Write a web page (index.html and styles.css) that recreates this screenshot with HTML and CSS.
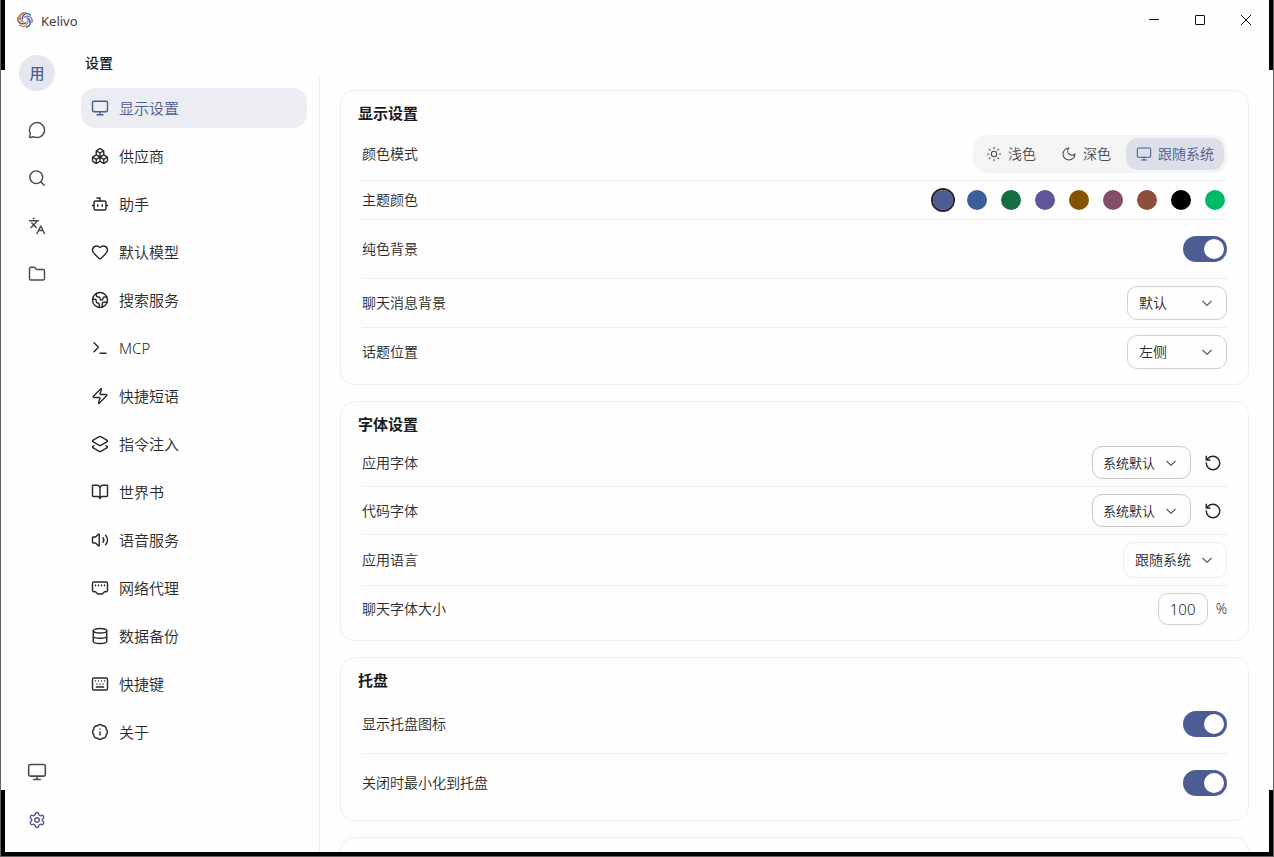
FILE: index.html
```html
<!DOCTYPE html>
<html lang="zh-CN">
<head>
<meta charset="utf-8">
<title>Kelivo</title>
<meta name="viewport" content="width=device-width, initial-scale=1">
<link rel="stylesheet" href="styles.css">
</head>
<body>
<div class="window">
  <header class="titlebar">
    <svg class="logo" viewBox="0 0 16 16" fill="none" stroke-width="1.6" stroke-linecap="round">
      <path stroke="#3f66a8" d="M5.300 7C5 3 9.500-.5 13.300 3"/>
      <path stroke="#8d84b5" d="M5.300 7C5 3 9.500-.5 13.300 3" transform="rotate(60 8 8)"/>
      <path stroke="#3f66a8" d="M5.300 7C5 3 9.500-.5 13.300 3" transform="rotate(120 8 8)"/>
      <path stroke="#c97f50" d="M5.300 7C5 3 9.500-.5 13.300 3" transform="rotate(180 8 8)"/>
      <path stroke="#3f66a8" d="M5.300 7C5 3 9.500-.5 13.300 3" transform="rotate(240 8 8)"/>
      <path stroke="#c97f50" d="M5.300 7C5 3 9.500-.5 13.300 3" transform="rotate(300 8 8)"/>
      <path stroke="#c97f50" d="M1.200 9C.8 4.500 4 1 8.500.900"/>
    </svg>
    <span class="app-name">Kelivo</span>
    <div class="window-controls">
      <button type="button" aria-label="最小化"><svg viewBox="0 0 12 12"><path d="M1 5.500h10"/></svg></button>
      <button type="button" aria-label="最大化"><svg viewBox="0 0 12 12"><rect x="1.500" y="1.500" width="9" height="9" rx=".5"/></svg></button>
      <button type="button" aria-label="关闭"><svg viewBox="0 0 12 12"><path d="m1 1 10 10M11 1 1 11"/></svg></button>
    </div>
  </header>

  <div class="workspace">
    <aside class="rail">
      <button type="button" class="avatar">用</button>
      <div class="rail-group">
        <button type="button" aria-label="聊天"><svg class="icon" viewBox="0 0 24 24"><path d="M2.992 16.342a2 2 0 0 1 .094 1.167l-1.065 3.290a1 1 0 0 0 1.236 1.168l3.413-.998a2 2 0 0 1 1.099.092 10 10 0 1 0-4.777-4.719"/></svg></button>
        <button type="button" aria-label="搜索"><svg class="icon" viewBox="0 0 24 24"><circle cx="11" cy="11" r="8.500"/><path d="m21.500 21.500-4.300-4.300"/></svg></button>
        <button type="button" aria-label="翻译"><svg class="icon" viewBox="0 0 24 24"><path d="m5 8 6 6M4 14l6-6 2-3M2 5h12M7 2h1M22 22l-5-10-5 10M14 18h6"/></svg></button>
        <button type="button" aria-label="文件"><svg class="icon" viewBox="0 0 24 24"><path d="M20 20a2 2 0 0 0 2-2V8a2 2 0 0 0-2-2h-7.900a2 2 0 0 1-1.690-.9L9.600 3.900A2 2 0 0 0 7.930 3H4a2 2 0 0 0-2 2v13a2 2 0 0 0 2 2Z"/></svg></button>
      </div>
      <div class="rail-group rail-bottom">
        <button type="button" aria-label="显示"><svg class="icon icon-large" viewBox="0 0 24 24"><rect x="2" y="3" width="20" height="14" rx="2"/><path d="M8 21h8M12 17v4"/></svg></button>
        <button type="button" class="current" aria-label="设置"><svg class="icon" viewBox="0 0 24 24"><path d="M9.671 4.136a2.340 2.340 0 0 1 4.659 0 2.340 2.340 0 0 0 3.319 1.915 2.340 2.340 0 0 1 2.330 4.033 2.340 2.340 0 0 0 0 3.831 2.340 2.340 0 0 1-2.330 4.033 2.340 2.340 0 0 0-3.319 1.915 2.340 2.340 0 0 1-4.659 0 2.340 2.340 0 0 0-3.320-1.915 2.340 2.340 0 0 1-2.330-4.033 2.340 2.340 0 0 0 0-3.831A2.340 2.340 0 0 1 6.350 6.051a2.340 2.340 0 0 0 3.319-1.915"/><circle cx="12" cy="12" r="3"/></svg></button>
      </div>
    </aside>

    <div class="page">
      <h1 class="page-title">设置</h1>
      <div class="page-body">
        <nav class="menu">
          <a href="#display" class="menu-item active"><svg class="icon" viewBox="0 0 24 24"><rect x="2" y="3" width="20" height="14" rx="2"/><path d="M8 21h8M12 17v4"/></svg><span>显示设置</span></a>
          <a href="#providers" class="menu-item"><svg class="icon" viewBox="0 0 24 24"><path d="M2.970 12.920A2 2 0 0 0 2 14.630v3.240a2 2 0 0 0 .97 1.710l3 1.800a2 2 0 0 0 2.060 0L12 19v-5.500l-5-3-4.030 2.420ZM7 16.500l-4.740-2.850M7 16.500l5-3M7 16.500v5.170M12 13.500V19l3.970 2.380a2 2 0 0 0 2.060 0l3-1.800a2 2 0 0 0 .97-1.710v-3.240a2 2 0 0 0-.97-1.710L17 10.500l-5 3ZM17 16.500l-5-3M17 16.500l4.740-2.850M17 16.500v5.170M7.970 4.420A2 2 0 0 0 7 6.130v4.370l5 3 5-3V6.130a2 2 0 0 0-.97-1.710l-3-1.800a2 2 0 0 0-2.060 0l-3 1.800ZM12 8 7.260 5.150M12 8l4.740-2.850M12 13.500V8"/></svg><span>供应商</span></a>
          <a href="#assistant" class="menu-item"><svg class="icon" viewBox="0 0 24 24"><rect x="4" y="8" width="16" height="12" rx="2"/><path d="M12 8V4H8M2 14h2M20 14h2M15 13v2M9 13v2"/></svg><span>助手</span></a>
          <a href="#model" class="menu-item"><svg class="icon" viewBox="0 0 24 24"><path d="M2 9.500a5.500 5.500 0 0 1 9.591-3.676.56.56 0 0 0 .818 0A5.490 5.490 0 0 1 22 9.500c0 2.290-1.500 4-3 5.500l-5.492 5.313a2 2 0 0 1-3 .019L5 15c-1.500-1.500-3-3.200-3-5.500"/></svg><span>默认模型</span></a>
          <a href="#search" class="menu-item"><svg class="icon" viewBox="0 0 24 24"><circle cx="12" cy="12" r="10"/><path d="M21.540 15H17a2 2 0 0 0-2 2v4.540M7 3.340V5a3 3 0 0 0 3 3 2 2 0 0 1 2 2c0 1.100.9 2 2 2a2 2 0 0 0 2-2c0-1.100.9-2 2-2h3.170M11 21.950V18a2 2 0 0 0-2-2 2 2 0 0 1-2-2v-1a2 2 0 0 0-2-2H2.050"/></svg><span>搜索服务</span></a>
          <a href="#mcp" class="menu-item"><svg class="icon" viewBox="0 0 24 24"><path d="m4 17 6-6-6-6M12 19h8"/></svg><span>MCP</span></a>
          <a href="#phrases" class="menu-item"><svg class="icon" viewBox="0 0 24 24"><path d="M4 14a1 1 0 0 1-.78-1.630l9.900-10.200a.5.500 0 0 1 .86.460l-1.920 6.020A1 1 0 0 0 13 10h7a1 1 0 0 1 .78 1.630l-9.900 10.200a.5.500 0 0 1-.86-.46l1.920-6.020A1 1 0 0 0 11 14z"/></svg><span>快捷短语</span></a>
          <a href="#injection" class="menu-item"><svg class="icon" viewBox="0 0 24 24"><path d="M13 13.740a2 2 0 0 1-2 0L2.500 8.870a1 1 0 0 1 0-1.740L11 2.260a2 2 0 0 1 2 0l8.500 4.870a1 1 0 0 1 0 1.740zM20 14.285l1.500.845a1 1 0 0 1 0 1.740L13 21.740a2 2 0 0 1-2 0l-8.500-4.870a1 1 0 0 1 0-1.740l1.500-.845"/></svg><span>指令注入</span></a>
          <a href="#worldbook" class="menu-item"><svg class="icon" viewBox="0 0 24 24"><path d="M12 7v14M3 18a1 1 0 0 1-1-1V4a1 1 0 0 1 1-1h5a4 4 0 0 1 4 4 4 4 0 0 1 4-4h5a1 1 0 0 1 1 1v13a1 1 0 0 1-1 1h-6a3 3 0 0 0-3 3 3 3 0 0 0-3-3z"/></svg><span>世界书</span></a>
          <a href="#voice" class="menu-item"><svg class="icon" viewBox="0 0 24 24"><path d="M11 4.702a.705.705 0 0 0-1.203-.498L6.413 7.587A1.400 1.400 0 0 1 5.416 8H3a1 1 0 0 0-1 1v6a1 1 0 0 0 1 1h2.416a1.400 1.400 0 0 1 .997.413l3.383 3.384A.705.705 0 0 0 11 19.298zM16 9a5 5 0 0 1 0 6M19.364 18.364a9 9 0 0 0 0-12.728"/></svg><span>语音服务</span></a>
          <a href="#proxy" class="menu-item"><svg class="icon" viewBox="0 0 24 24"><path d="m15 20 3-3h2a2 2 0 0 0 2-2V6a2 2 0 0 0-2-2H4a2 2 0 0 0-2 2v9a2 2 0 0 0 2 2h2l3 3zM6 8v1M10 8v1M14 8v1M18 8v1"/></svg><span>网络代理</span></a>
          <a href="#backup" class="menu-item"><svg class="icon" viewBox="0 0 24 24"><ellipse cx="12" cy="5" rx="9" ry="3"/><path d="M3 5v14a9 3 0 0 0 18 0V5M3 12a9 3 0 0 0 18 0"/></svg><span>数据备份</span></a>
          <a href="#hotkeys" class="menu-item"><svg class="icon" viewBox="0 0 24 24"><rect x="2" y="4" width="20" height="16" rx="2"/><path d="M10 8h.01M12 12h.01M14 8h.01M16 12h.01M18 8h.01M6 8h.01M7 16h10M8 12h.01"/></svg><span>快捷键</span></a>
          <a href="#about" class="menu-item"><svg class="icon" viewBox="0 0 24 24"><path d="M3.850 8.620a4 4 0 0 1 4.780-4.770 4 4 0 0 1 6.740 0 4 4 0 0 1 4.780 4.780 4 4 0 0 1 0 6.740 4 4 0 0 1-4.770 4.780 4 4 0 0 1-6.750 0 4 4 0 0 1-4.780-4.770 4 4 0 0 1 0-6.760ZM12 16v-4M12 8h.01"/></svg><span>关于</span></a>
        </nav>

        <main class="content">
          <section class="card" id="display">
            <h2>显示设置</h2>
            <div class="row">
              <span class="label">颜色模式</span>
              <div class="segmented">
                <button type="button"><svg class="icon icon-small" viewBox="0 0 24 24"><circle cx="12" cy="12" r="4"/><path d="M12 2v2M12 20v2M4.930 4.930l1.410 1.410M17.660 17.660l1.410 1.410M2 12h2M20 12h2M6.340 17.660l-1.410 1.410M19.070 4.930l-1.410 1.410"/></svg>浅色</button>
                <button type="button"><svg class="icon icon-small" viewBox="0 0 24 24"><path d="M12 3a6 6 0 0 0 9 9 9 9 0 1 1-9-9"/></svg>深色</button>
                <button type="button" class="selected" aria-pressed="true"><svg class="icon icon-small" viewBox="0 0 24 24"><rect x="2" y="3" width="20" height="14" rx="2"/><path d="M8 21h8M12 17v4"/></svg>跟随系统</button>
              </div>
            </div>
            <div class="row">
              <span class="label">主题颜色</span>
              <div class="swatches">
                <input type="radio" name="theme" class="swatch indigo" aria-label="靛蓝" checked>
                <input type="radio" name="theme" class="swatch blue" aria-label="蓝色">
                <input type="radio" name="theme" class="swatch green" aria-label="绿色">
                <input type="radio" name="theme" class="swatch purple" aria-label="紫色">
                <input type="radio" name="theme" class="swatch amber" aria-label="琥珀">
                <input type="radio" name="theme" class="swatch plum" aria-label="梅红">
                <input type="radio" name="theme" class="swatch rust" aria-label="赤褐">
                <input type="radio" name="theme" class="swatch black" aria-label="黑色">
                <input type="radio" name="theme" class="swatch mint" aria-label="翠绿">
              </div>
            </div>
            <div class="row roomy">
              <label class="label" for="plain-bg">纯色背景</label>
              <input type="checkbox" class="toggle" id="plain-bg" checked>
            </div>
            <div class="row">
              <label class="label" for="message-bg">聊天消息背景</label>
              <div class="select"><select id="message-bg" class="wide"><option>默认</option></select><svg class="chevron" viewBox="0 0 14 14"><path d="m2.500 5 4.500 4.500L11.500 5"/></svg></div>
            </div>
            <div class="row">
              <label class="label" for="topic-side">话题位置</label>
              <div class="select"><select id="topic-side" class="wide"><option>左侧</option></select><svg class="chevron" viewBox="0 0 14 14"><path d="m2.500 5 4.500 4.500L11.500 5"/></svg></div>
            </div>
          </section>

          <section class="card">
            <h2>字体设置</h2>
            <div class="row">
              <label class="label" for="app-font">应用字体</label>
              <div class="controls">
                <div class="select"><select id="app-font" class="font"><option>系统默认</option></select><svg class="chevron" viewBox="0 0 14 14"><path d="m2.500 5 4.500 4.500L11.500 5"/></svg></div>
                <button type="button" class="reset" aria-label="重置应用字体"><svg class="icon" viewBox="0 0 24 24"><path d="M3 12a9 9 0 1 0 9-9 9.750 9.750 0 0 0-6.740 2.740L3 8M3 3v5h5"/></svg></button>
              </div>
            </div>
            <div class="row">
              <label class="label" for="code-font">代码字体</label>
              <div class="controls">
                <div class="select"><select id="code-font" class="font"><option>系统默认</option></select><svg class="chevron" viewBox="0 0 14 14"><path d="m2.500 5 4.500 4.500L11.500 5"/></svg></div>
                <button type="button" class="reset" aria-label="重置代码字体"><svg class="icon" viewBox="0 0 24 24"><path d="M3 12a9 9 0 1 0 9-9 9.750 9.750 0 0 0-6.740 2.740L3 8M3 3v5h5"/></svg></button>
              </div>
            </div>
            <div class="row">
              <label class="label" for="language">应用语言</label>
              <div class="select"><select id="language" class="language"><option>跟随系统</option></select><svg class="chevron" viewBox="0 0 14 14"><path d="m2.500 5 4.500 4.500L11.500 5"/></svg></div>
            </div>
            <div class="row">
              <label class="label" for="font-size">聊天字体大小</label>
              <div class="controls"><input type="text" id="font-size" class="number" inputmode="numeric" value="100"><span class="unit">%</span></div>
            </div>
          </section>

          <section class="card">
            <h2>托盘</h2>
            <div class="row roomy">
              <label class="label" for="tray-icon">显示托盘图标</label>
              <input type="checkbox" class="toggle" id="tray-icon" checked>
            </div>
            <div class="row roomy">
              <label class="label" for="tray-close">关闭时最小化到托盘</label>
              <input type="checkbox" class="toggle" id="tray-close" checked>
            </div>
          </section>

          <section class="card next-card"></section>
        </main>
      </div>
    </div>
  </div>
  <div class="corner top-left"></div>
  <div class="corner top-right"></div>
  <div class="corner bottom-left"></div>
  <div class="corner bottom-right"></div>
</div>
</body>
</html>
```
FILE: styles.css
```css
:root {
  --accent: #4d5c92;
  --text: #28292b;
  --strong: #1b1b1e;
  --line: #eeeeef;
  --surface: #fefefe;
}

* { box-sizing: border-box; }

body {
  margin: 0;
  background: var(--surface);
  color: var(--text);
  font: 350 14px/20px "Noto Sans", "Noto Sans CJK SC", sans-serif;
}

button, input, select {
  margin: 0;
  font: inherit;
  color: inherit;
}

button {
  padding: 0;
  border: 0;
  background: none;
}

.window {
  position: relative;
  display: flex;
  flex-direction: column;
  height: 100vh;
  padding: 0 4px 4px;
  border: 1px solid #626262;
  border-top: 0;
  overflow: hidden;
}

/* Black edges of the window frame */
.corner {
  position: absolute;
  width: 4px;
  height: 70px;
  background: #000;
}
.top-left { top: 0; left: 0; }
.top-right { top: 0; right: 0; }
.bottom-left { bottom: 0; left: 0; height: 66px; }
.bottom-right { bottom: 0; right: 0; height: 66px; }
.window::after {
  content: "";
  position: absolute;
  right: 0;
  bottom: 0;
  left: 0;
  height: 4px;
  background: #000;
}

.titlebar {
  display: flex;
  flex: none;
  align-items: center;
  gap: 8px;
  height: 40px;
  padding-left: 12px;
  font-size: 13px;
  font-weight: 400;
}
.app-name { color: #3a3a3c; line-height: 18px; padding-top: 2px; }
.logo { width: 16px; height: 16px; }
.window-controls { display: flex; margin-left: auto; }
.window-controls button {
  display: grid;
  place-items: center;
  width: 46px;
  height: 40px;
}
.window-controls svg {
  width: 12px;
  height: 12px;
  fill: none;
  stroke: #111;
  stroke-width: 1;
}

.workspace {
  display: flex;
  flex: 1;
  min-height: 0;
}

.icon {
  flex: none;
  width: 18px;
  height: 18px;
  fill: none;
  stroke: currentColor;
  stroke-width: 1.900;
  stroke-linecap: round;
  stroke-linejoin: round;
}
.icon-small { width: 16px; height: 16px; stroke-width: 1.600; }
.icon-large { width: 20px; height: 20px; }

.rail {
  display: flex;
  flex: none;
  flex-direction: column;
  align-items: center;
  width: 64px;
  padding: 15px 0 12px;
}
.avatar {
  width: 36px;
  height: 36px;
  border-radius: 50%;
  background: #e4e7ef;
  color: var(--accent);
  font-size: 15px;
  font-weight: 500;
}
.rail-group {
  display: flex;
  flex-direction: column;
  gap: 8px;
  margin-top: 19px;
}
.rail-group button {
  display: grid;
  place-items: center;
  width: 40px;
  height: 40px;
  color: #4a4a4c;
}
.rail-group .current { color: var(--accent); }
.rail-bottom { margin-top: auto; }

.page {
  display: flex;
  flex: 1;
  flex-direction: column;
  min-width: 0;
}
.page-title {
  flex: none;
  height: 36px;
  margin: 0;
  padding: 13px 16px 0;
  color: var(--strong);
  font-size: 14px;
  font-weight: 500;
}
.page-body {
  display: flex;
  flex: 1;
  min-height: 0;
}

.menu {
  display: flex;
  flex: none;
  flex-direction: column;
  gap: 8px;
  width: 251px;
  padding: 12px;
  border-right: 1px solid var(--line);
}
.menu-item {
  display: flex;
  align-items: center;
  gap: 10px;
  height: 40px;
  padding: 0 10px;
  border-radius: 14px;
  color: var(--text);
  font-size: 15px;
  text-decoration: none;
}
.menu-item.active { background: #ecedf3; color: var(--accent); }

.content {
  display: flex;
  flex: 1;
  flex-direction: column;
  gap: 16px;
  min-width: 0;
  padding: 14px 20px 0;
  overflow: hidden;
}

.card {
  flex: none;
  padding: 12px 17px 8px;
  border: 1px solid var(--line);
  border-radius: 14px;
}
.card h2 {
  margin: 0 0 5px;
  color: var(--strong);
  font-size: 15px;
  font-weight: 700;
  line-height: 20px;
}
.next-card { height: 120px; }

.row {
  display: flex;
  align-items: center;
  justify-content: space-between;
  margin: 0 4px;
  padding: 7px 0;
}
.row.roomy { padding: 16px 0; }
.row + .row { border-top: 1px solid var(--line); }

.controls { display: flex; align-items: center; }

.segmented {
  display: flex;
  gap: 5px;
  padding: 3px;
  border-radius: 14px;
  background: #f4f4f5;
}
.segmented button {
  display: flex;
  align-items: center;
  gap: 6px;
  height: 32px;
  padding: 0 10px;
  border-radius: 12px;
  color: #4a4a4c;
}
.segmented .selected { background: #dcdfe8; color: var(--accent); }

.swatches { display: flex; gap: 10px; }
.swatch {
  width: 24px;
  height: 24px;
  border: 2px solid transparent;
  border-radius: 50%;
  background: currentColor;
  background-clip: padding-box;
  appearance: none;
}
.swatch:checked { border-color: #23262f; }
.indigo { color: #4d5c92; }
.blue { color: #3b6099; }
.green { color: #156c45; }
.purple { color: #5f5699; }
.amber { color: #855400; }
.plum { color: #844f6d; }
.rust { color: #8b4f3b; }
.black { color: #000; }
.mint { color: #00ba69; }

.toggle {
  width: 44px;
  height: 26px;
  padding: 3px;
  border-radius: 13px;
  background: #d5d6db;
  appearance: none;
}
.toggle::before {
  content: "";
  display: block;
  width: 20px;
  height: 20px;
  border-radius: 50%;
  background: #fff;
}
.toggle:checked { background: var(--accent); }
.toggle:checked::before { margin-left: auto; }

.select { position: relative; display: flex; }
.select select {
  height: 34px;
  padding: 0 11px;
  border: 1px solid #cfcfd1;
  border-radius: 10px;
  background: none;
  appearance: none;
}
.select .wide { width: 100px; }
.select .font {
  width: 99px;
  height: 33px;
  padding: 0 10px;
  border-color: #c6c6c8;
  color: var(--strong);
  font-size: 13px;
}
.select .language {
  width: 104px;
  height: 36px;
  border-color: var(--line);
}
.chevron {
  position: absolute;
  top: 50%;
  right: 13px;
  width: 14px;
  height: 14px;
  margin-top: -7px;
  fill: none;
  stroke: #5f5f62;
  stroke-width: 1.200;
  pointer-events: none;
}

.reset {
  display: grid;
  place-items: center;
  width: 28px;
  height: 28px;
  margin-left: 8px;
  color: #222;
}

.number {
  width: 50px;
  height: 32px;
  padding: 0;
  border: 1px solid #cfcfd1;
  border-radius: 10px;
  background: none;
  color: var(--strong);
  font-size: 15px;
  text-align: center;
}
.unit { margin-left: 8px; font-size: 14px; }
```
